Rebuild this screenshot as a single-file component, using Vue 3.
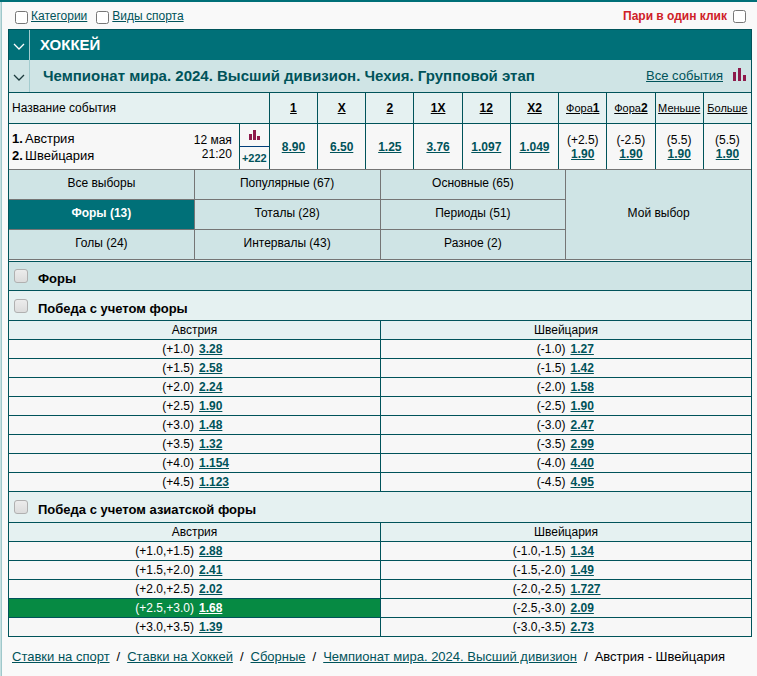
<script setup>
import { ref } from 'vue'

const outcomes = [
  { head: '1', odds: '8.90' },
  { head: 'X', odds: '6.50' },
  { head: '2', odds: '1.25' },
  { head: '1X', odds: '3.76' },
  { head: '12', odds: '1.097' },
  { head: 'X2', odds: '1.049' },
  { light: 'Фора', head: '1', line: '(+2.5)', odds: '1.90' },
  { light: 'Фора', head: '2', line: '(-2.5)', odds: '1.90' },
  { light: 'Меньше', line: '(5.5)', odds: '1.90' },
  { light: 'Больше', line: '(5.5)', odds: '1.90' },
]

const tabs = [
  'Все выборы', 'Популярные (67)', 'Основные (65)',
  'Форы (13)', 'Тоталы (28)', 'Периоды (51)',
  'Голы (24)', 'Интервалы (43)', 'Разное (2)',
]
const activeTab = ref('Форы (13)')

const markets = [
  {
    id: 'handicap',
    title: 'Победа с учетом форы',
    rows: [
      ['(+1.0)', '3.28', '(-1.0)', '1.27'],
      ['(+1.5)', '2.58', '(-1.5)', '1.42'],
      ['(+2.0)', '2.24', '(-2.0)', '1.58'],
      ['(+2.5)', '1.90', '(-2.5)', '1.90'],
      ['(+3.0)', '1.48', '(-3.0)', '2.47'],
      ['(+3.5)', '1.32', '(-3.5)', '2.99'],
      ['(+4.0)', '1.154', '(-4.0)', '4.40'],
      ['(+4.5)', '1.123', '(-4.5)', '4.95'],
    ],
  },
  {
    id: 'asian',
    title: 'Победа с учетом азиатской форы',
    rows: [
      ['(+1.0,+1.5)', '2.88', '(-1.0,-1.5)', '1.34'],
      ['(+1.5,+2.0)', '2.41', '(-1.5,-2.0)', '1.49'],
      ['(+2.0,+2.5)', '2.02', '(-2.0,-2.5)', '1.727'],
      ['(+2.5,+3.0)', '1.68', '(-2.5,-3.0)', '2.09'],
      ['(+3.0,+3.5)', '1.39', '(-3.0,-3.5)', '2.73'],
    ],
  },
]
const picked = ref('(+2.5,+3.0)')

const crumbs = [
  'Ставки на спорт',
  'Ставки на Хоккей',
  'Сборные',
  'Чемпионат мира. 2024. Высший дивизион',
]
</script>

<template>
  <div class="page">
    <div class="filters">
      <input id="f-cat" type="checkbox" />
      <label for="f-cat" class="filter-link">Категории</label>
      <input id="f-sport" type="checkbox" class="second" />
      <label for="f-sport" class="filter-link">Виды спорта</label>
      <label for="f-click" class="one-click">Пари в один клик</label>
      <input id="f-click" type="checkbox" />
    </div>

    <main class="board">
      <header class="sport">
        <button type="button" class="toggle" aria-label="Свернуть">
          <svg width="12" height="7" viewBox="0 0 12 7"><path d="M1 1 L6 6 L11 1" /></svg>
        </button>
        <h1>ХОККЕЙ</h1>
      </header>
      <div class="league">
        <button type="button" class="toggle" aria-label="Свернуть">
          <svg width="12" height="7" viewBox="0 0 12 7"><path d="M1 1 L6 6 L11 1" /></svg>
        </button>
        <h2>Чемпионат мира. 2024. Высший дивизион. Чехия. Групповой этап</h2>
        <a href="#" class="all">Все события</a>
        <svg class="bars" width="13" height="16" viewBox="0 0 13 16">
          <path d="M0 4h3v9H0zM5 0h3v13H5zM10 7h3v6h-3z" />
        </svg>
      </div>

      <table class="event">
        <colgroup>
          <col />
          <col class="c-icon" />
          <col v-for="(o, i) in outcomes" :key="i" class="c-odds" />
        </colgroup>
        <thead>
          <tr>
            <th colspan="2" class="name-head">Название события</th>
            <th v-for="(o, i) in outcomes" :key="i">
              <a href="#"><span v-if="o.light" class="light">{{ o.light }}</span>{{ o.head }}</a>
            </th>
          </tr>
        </thead>
        <tbody>
          <tr>
            <td class="match">
              <div class="match-row">
                <div class="teams">
                  <div><b>1.</b>Австрия</div>
                  <div><b>2.</b>Швейцария</div>
                </div>
                <div class="date">12 мая<br />21:20</div>
              </div>
            </td>
            <td class="extra">
              <div class="stat">
                <svg class="bars" width="11" height="10" viewBox="0 0 11 10">
                  <path d="M0 4h3v6H0zM4 0h3v10H4zM8 6h3v4H8z" />
                </svg>
              </div>
              <a href="#" class="more">+222</a>
            </td>
            <td v-for="(o, i) in outcomes" :key="i" class="odds">
              <template v-if="o.line">{{ o.line }}<br /></template><a href="#">{{ o.odds }}</a>
            </td>
          </tr>
        </tbody>
      </table>

      <nav class="tabs">
        <button
          v-for="t in tabs"
          :key="t"
          type="button"
          :class="{ active: t === activeTab }"
          @click="activeTab = t"
        >{{ t }}</button>
        <button type="button" class="mine">Мой выбор</button>
      </nav>

      <div class="section group">
        <input id="g-all" type="checkbox" />
        <label for="g-all">Форы</label>
      </div>

      <template v-for="m in markets" :key="m.id">
        <div class="section">
          <input :id="m.id" type="checkbox" />
          <label :for="m.id">{{ m.title }}</label>
        </div>
        <table class="market">
          <thead>
            <tr><th>Австрия</th><th>Швейцария</th></tr>
          </thead>
          <tbody>
            <tr v-for="r in m.rows" :key="r[0]">
              <td :class="{ picked: r[0] === picked }" @click="picked = r[0]">
                <div class="pair"><span>{{ r[0] }}</span><a href="#">{{ r[1] }}</a></div>
              </td>
              <td :class="{ picked: r[2] === picked }" @click="picked = r[2]">
                <div class="pair"><span>{{ r[2] }}</span><a href="#">{{ r[3] }}</a></div>
              </td>
            </tr>
          </tbody>
        </table>
      </template>
    </main>

    <nav class="crumbs">
      <template v-for="c in crumbs" :key="c"><a href="#">{{ c }}</a><i>/</i></template>
      <span>Австрия - Швейцария</span>
    </nav>
  </div>
</template>

<style>
body {
  background: #f9f9f9;
}
</style>

<style scoped>
.page {
  min-height: 100vh;
  box-sizing: border-box;
  border-top: 2px solid #007078;
  padding: 0 5px 0 8px;
  font: 12px/14px "Liberation Sans", Arial, sans-serif;
  color: #000;
  background: #f9f9f9;
  box-shadow: inset 1px 0 #c5dfe0, inset 2px 0 #9fc8cb;
}
a {
  color: #00535a;
}
button {
  font: inherit;
  color: inherit;
  border: 0;
  margin: 0;
  padding: 0;
  background: none;
  cursor: pointer;
}

.filters {
  display: flex;
  align-items: center;
  height: 27px;
  padding: 1px 6px 0 7px;
  box-sizing: border-box;
}
.filters input {
  width: 13px;
  height: 13px;
  margin: 2px 0 0;
}
.filters .second {
  margin-left: 9px;
}
.filter-link {
  margin-left: 3px;
  color: #00535a;
  text-decoration: underline;
}
.one-click {
  margin: 0 6px 0 auto;
  font-weight: bold;
  color: #cf2027;
}
.one-click + input {
  margin-top: 0;
}

.board {
  border: 1px solid #00535a;
  background: #f7f7f7;
}
.sport,
.league {
  display: flex;
  align-items: center;
}
.sport {
  height: 30px;
  background: #007078;
  color: #fff;
}
.league {
  height: 32px;
  background: #cfe4e5;
  color: #00535a;
  padding-right: 5px;
}
.toggle {
  display: flex;
  align-items: center;
  justify-content: center;
  align-self: stretch;
  width: 21px;
  padding-top: 2px;
  border-right: 1px solid #a3cccf;
}
.toggle path {
  fill: none;
  stroke: currentColor;
  stroke-width: 1.3;
}
.league .toggle {
  color: #1d3b3e;
}
h1,
h2 {
  margin: 0;
  font-size: 15px;
  line-height: 18px;
}
h1 {
  margin-left: 10px;
}
h2 {
  flex: 1;
  margin-left: 13px;
}
.all {
  margin-right: 10px;
  font-size: 13px;
}
.bars {
  fill: #8e1a4b;
}

table {
  width: 100%;
  table-layout: fixed;
  border-collapse: separate;
  border-spacing: 0;
}
th,
td {
  padding: 0;
  border-top: 1px solid #00535a;
  text-align: center;
}
th + th,
td + td {
  border-left: 1px solid #00535a;
}
.c-icon {
  width: 30px;
}
.c-odds {
  width: 6.5%;
}
.event th {
  height: 30px;
  background: #e5f1f1;
}
.event th a {
  color: #000;
}
.light {
  font-size: 11px;
  font-weight: normal;
}
.event .name-head {
  padding-left: 3px;
  text-align: left;
  font-weight: normal;
}
.event td {
  height: 45px;
}
.match-row {
  display: flex;
  justify-content: space-between;
  align-items: center;
  padding: 0 7px 0 3px;
}
.teams {
  text-align: left;
  font-size: 13px;
  line-height: 17px;
}
.teams b {
  display: inline-block;
  width: 13px;
}
.date {
  text-align: right;
}
.stat {
  display: flex;
  align-items: center;
  justify-content: center;
  height: 22px;
  border-bottom: 1px solid #003e7a;
}
.more {
  display: block;
  font-size: 11px;
  font-weight: bold;
  line-height: 22px;
  text-decoration: none;
}
.odds a {
  font-weight: bold;
}

.tabs {
  display: grid;
  grid-template-columns: repeat(4, 1fr);
  gap: 1px;
  padding: 1px 0;
  background: #757575;
}
.tabs button {
  min-height: 29px;
  padding-bottom: 3px;
  background: #cfe4e5;
}
.tabs .active {
  background: #007078;
  color: #fff;
  font-weight: bold;
}
.tabs .mine {
  grid-column: 4;
  grid-row: 1 / 4;
}

.section {
  display: flex;
  align-items: center;
  height: 29px;
  border-top: 1px solid #00535a;
  background: #e5f1f1;
}
.group {
  height: 28px;
  margin-top: 1px;
  background: #cfe4e5;
}
.section input {
  appearance: none;
  box-sizing: border-box;
  width: 14px;
  height: 14px;
  margin: 0 10px 0 5px;
  border: 1px solid #b0b0b0;
  border-radius: 3px;
  background: linear-gradient(#ececec, #dcdcdc);
}
.section label {
  padding-top: 6px;
  font-size: 13px;
  font-weight: bold;
}

.market th {
  height: 18px;
  font-weight: normal;
  background: #e5f1f1;
}
.market td {
  height: 18px;
}
.market + .section {
  height: 30px;
}
.pair {
  display: grid;
  grid-template-columns: 1fr 1fr;
  gap: 5px;
  padding-left: 4px;
}
.pair span {
  text-align: right;
}
.pair a {
  text-align: left;
  font-weight: bold;
}
.picked {
  background: #068a43;
  color: #fff;
}
.picked a {
  color: #fff;
}

.crumbs {
  padding: 12px 4px;
  font-size: 13px;
  line-height: 16px;
}
.crumbs i {
  font-style: normal;
  margin: 0 7px;
}
</style>
